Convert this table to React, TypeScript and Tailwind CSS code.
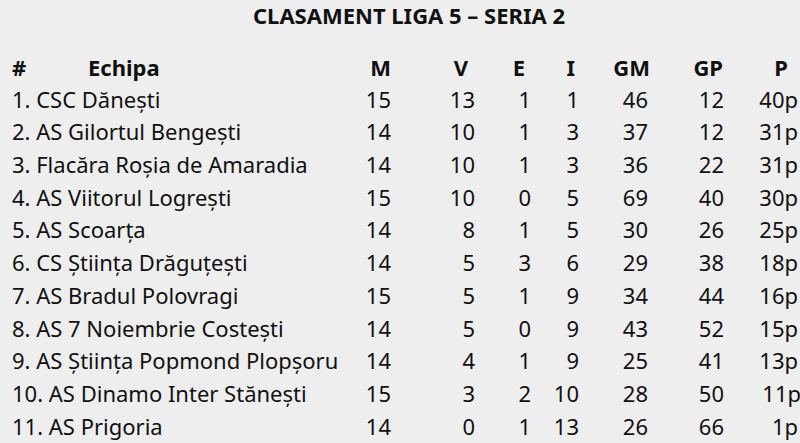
import React from "react";

type Row = { name: string; m: string; v: string; e: string; i: string; gm: string; gp: string; p: string; pCls?: string };

const rows: Row[] = [
  { name: "1. CSC Dănești", m: "15", v: "13", e: "1", i: "1", gm: "46", gp: "12", p: "40p" },
  { name: "2. AS Gilortul Bengești", m: "14", v: "10", e: "1", i: "3", gm: "37", gp: "12", p: "31p" },
  { name: "3. Flacăra Roșia de Amaradia", m: "14", v: "10", e: "1", i: "3", gm: "36", gp: "22", p: "31p" },
  { name: "4. AS Viitorul Logrești", m: "15", v: "10", e: "0", i: "5", gm: "69", gp: "40", p: "30p" },
  { name: "5. AS Scoarța", m: "14", v: "8", e: "1", i: "5", gm: "30", gp: "26", p: "25p" },
  { name: "6. CS Știința Drăguțești", m: "14", v: "5", e: "3", i: "6", gm: "29", gp: "38", p: "18p" },
  { name: "7. AS Bradul Polovragi", m: "15", v: "5", e: "1", i: "9", gm: "34", gp: "44", p: "16p" },
  { name: "8. AS 7 Noiembrie Costești", m: "14", v: "5", e: "0", i: "9", gm: "43", gp: "52", p: "15p" },
  { name: "9. AS Știința Popmond Plopșoru", m: "14", v: "4", e: "1", i: "9", gm: "25", gp: "41", p: "13p" },
  { name: "10. AS Dinamo Inter Stănești", m: "15", v: "3", e: "2", i: "10", gm: "28", gp: "50", p: "11p", pCls: "translate-x-[3px]" },
  { name: "11. AS Prigoria", m: "14", v: "0", e: "1", i: "13", gm: "26", gp: "66", p: "1p" },
];

const grid = "grid grid-cols-[339px_40px_84px_56px_48px_69px_76px_74px]";

export default function App() {
  return (
    <div className="w-[800px] h-[443px] overflow-hidden bg-[#edeeed] text-[#111111] font-['Noto_Sans',sans-serif] text-[22px]">
      <div className="h-[30px] leading-[30px] text-center pl-[18px] font-bold">CLASAMENT LIGA 5 – SERIA 2</div>
      <div className="pl-[12px] pt-[22px]">
        <div className={`${grid} h-[30.7px] leading-[30.7px] font-bold`}>
          <div className="flex">
            <span className="w-[76px]">#</span>
            <span>Echipa</span>
          </div>
          <div className="text-right">M</div>
          <div className="text-right pr-[7px]">V</div>
          <div className="text-right pr-[6px]">E</div>
          <div className="text-right pr-[4px]">I</div>
          <div className="text-right -mr-[2px]">GM</div>
          <div className="text-right pr-[1px]">GP</div>
          <div className="text-right pr-[10px]">P</div>
        </div>
        {rows.map((r) => (
          <div key={r.name} className={`${grid} h-[32.7px] leading-[32.7px] whitespace-nowrap`}>
            <div>{r.name}</div>
            <div className="text-right">{r.m}</div>
            <div className="text-right">{r.v}</div>
            <div className="text-right">{r.e}</div>
            <div className="text-right">{r.i}</div>
            <div className="text-right">{r.gm}</div>
            <div className="text-right">{r.gp}</div>
            <div className={`text-right ${r.pCls ?? ""}`}>{r.p}</div>
          </div>
        ))}
      </div>
    </div>
  );
}
